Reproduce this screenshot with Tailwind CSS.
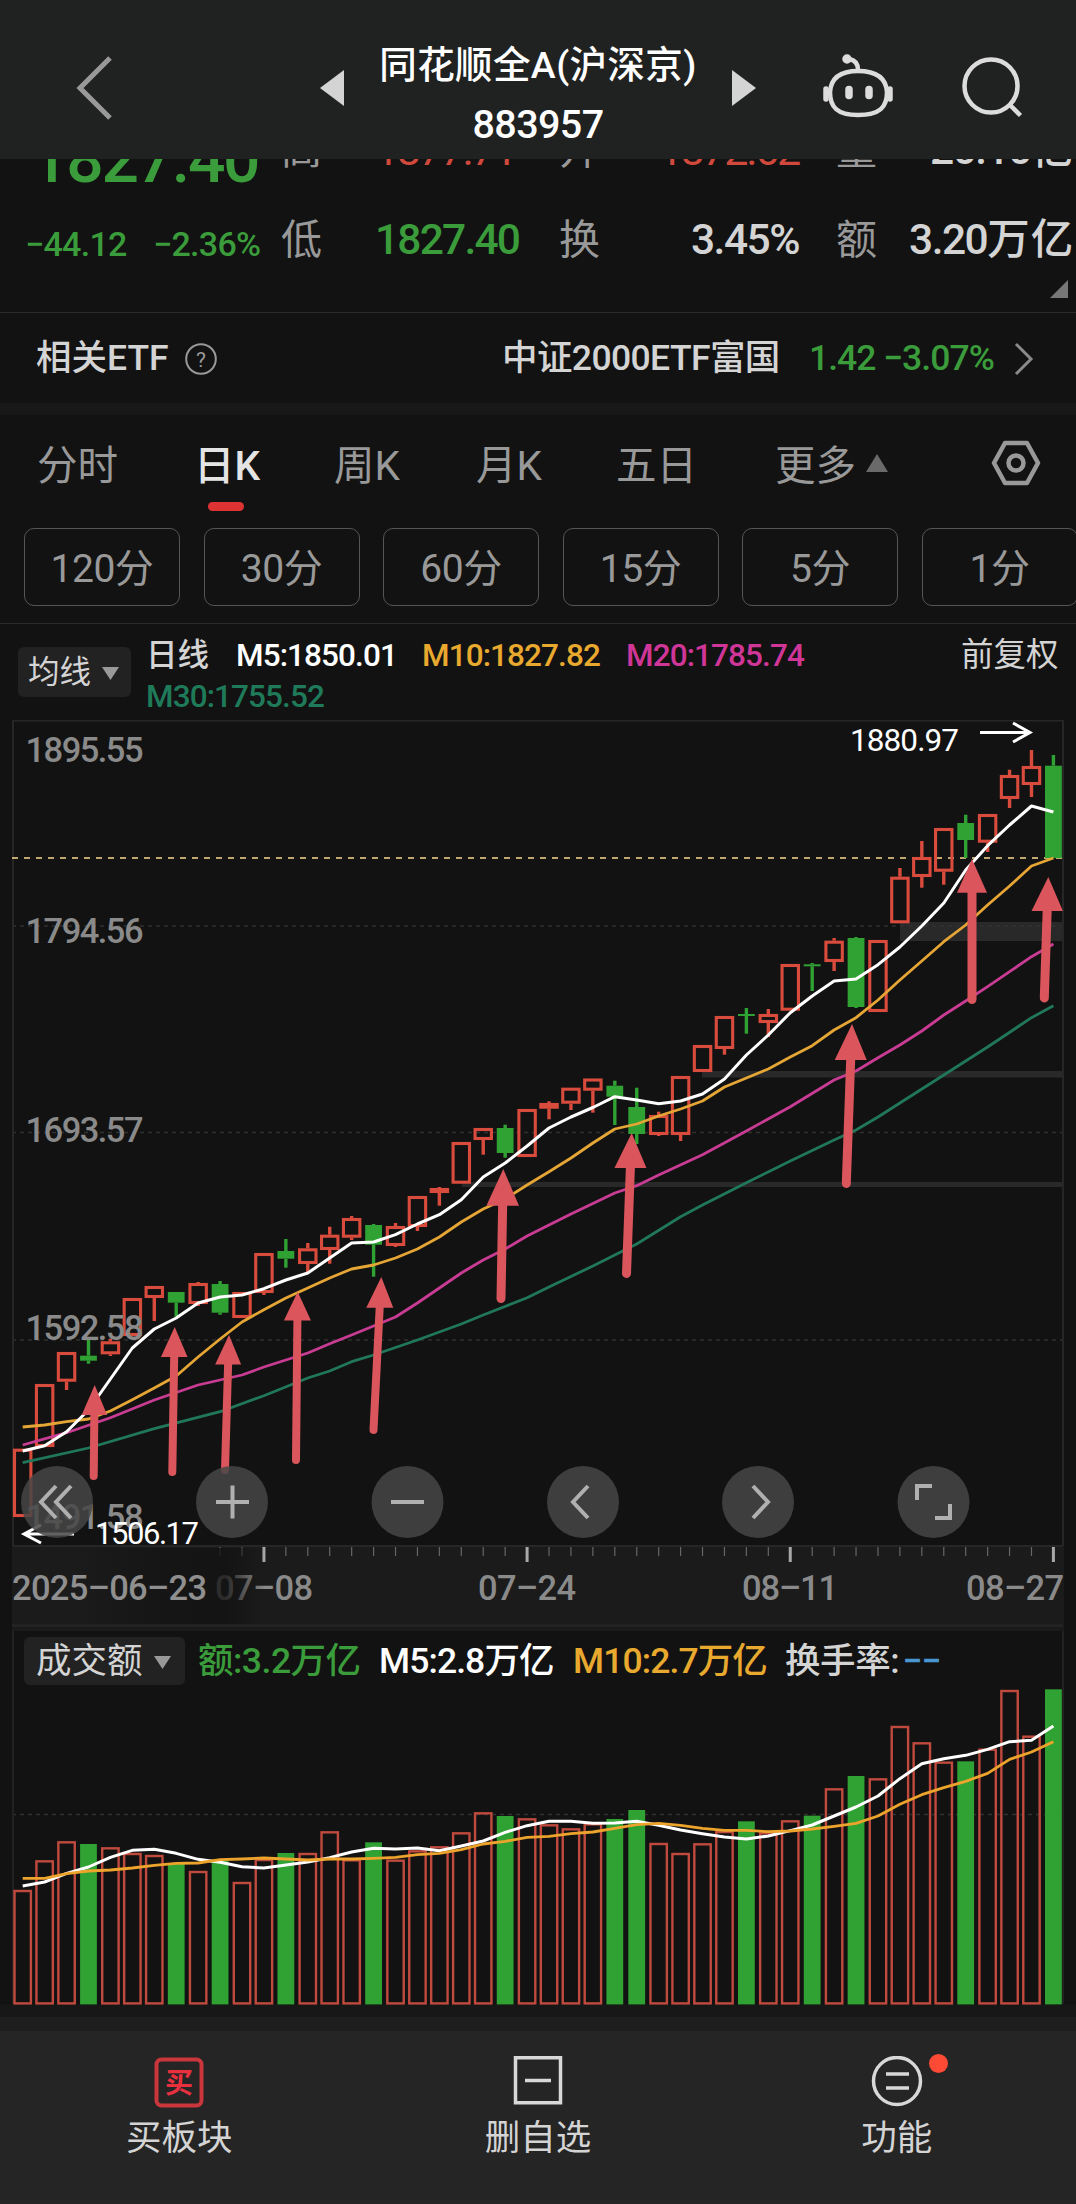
<!DOCTYPE html>
<html lang="zh-CN">
<head>
<meta charset="utf-8">
<title>同花顺全A 883957</title>
<script src="https://cdn.jsdelivr.net/npm/@tailwindcss/browser@4"></script>
</head>
<body class="bg-[#121212] overflow-hidden">
<div class="w-[1076px] h-[2204px] flex flex-col overflow-hidden font-[Roboto,'Noto_Sans_CJK_SC',sans-serif] text-[#d4d4d4] whitespace-nowrap leading-none">

  <header class="h-[159px] shrink-0 bg-[#202221] flex z-10">
    <div class="w-[320px] pl-[74px] pt-[54px]">
      <svg width="42" height="68" fill="none" stroke="#999" stroke-width="5"><path d="M36 4 6 34 36 64"/></svg>
    </div>
    <svg class="mt-[70px] shrink-0" width="24" height="36" fill="#d4d4d4"><path d="M0 18 24 0V36z"/></svg>
    <div class="w-[388px] pt-[46px] flex flex-col items-center text-white font-medium">
      <div class="h-10 flex items-center text-[37.5px] tracking-[0.4px]">同花顺全A(沪深京)</div>
      <div class="h-[42px] mt-[18px] flex items-center text-[39.5px] tracking-[-0.6px]">883957</div>
    </div>
    <svg class="mt-[70px] shrink-0" width="24" height="36" fill="#d4d4d4"><path d="M24 18 0 0V36z"/></svg>
    <svg class="ml-[62px] mt-[50px] shrink-0" width="80" height="74" fill="none" stroke="#dcdcdc" stroke-width="4.5" stroke-linecap="round">
      <path d="M40 21C58 21 68 28 69 42C69 57 62 65 40 65C19 65 12 57 12 42C13 28 22 21 40 21z"/><path d="M8 39v10M72 39v10" stroke-width="5.5"/><path d="M40 20c0-6-3-10-9-11"/><circle cx="29" cy="9" r="2.5" fill="#dcdcdc"/><path d="M31 39.500v6M51 39.500v6" stroke-width="7.500"/>
    </svg>
    <svg class="ml-[58px] mt-[50px] shrink-0" width="70" height="74" fill="none" stroke="#dcdcdc" stroke-width="4.500"><circle cx="35" cy="36" r="26.500"/><path d="M54 55 64.500 65.500"/></svg>
  </header>

  <section class="h-[153px] shrink-0 flex border-b border-[#2a2a2a] box-content">
    <div class="w-[281px] pl-[26px] text-[#3a9c3a] font-medium">
      <div class="-mt-[33px] h-[68px] pl-[5px] flex items-center text-[66px] tracking-[-2.3px]">1827.40</div>
      <div class="mt-[30px] h-10 -ml-px flex items-center text-[34px] tracking-[-0.7px]"><span class="w-[128px]">−44.12</span><span>−2.36%</span></div>
    </div>
    <div class="w-[278px] text-[41px]">
      <div class="-mt-[29px] h-10 flex items-center"><span class="w-[94px] text-[#999]">高</span><span class="text-[#d1493c] tracking-[-2.300px] text-[43px]">1877.71</span></div>
      <div class="mt-[50px] h-10 flex items-center"><span class="w-[94px] text-[#999]">低</span><span class="text-[#3a9c3a] tracking-[-1.8px] text-[42.5px] font-medium">1827.40</span></div>
    </div>
    <div class="w-[240px] text-[41px] shrink-0">
      <div class="-mt-[29px] h-10 flex items-center justify-between"><span class="text-[#999]">开</span><span class="text-[#d1493c] tracking-[-2.300px] text-[43px]">1872.62</span></div>
      <div class="mt-[50px] h-10 flex items-center justify-between"><span class="text-[#999]">换</span><span class="tracking-[-1.5px] text-[42.5px] font-medium">3.45%</span></div>
    </div>
    <div class="ml-[37px] w-[240px] text-[41px] shrink-0">
      <div class="-mt-[29px] h-10 flex items-center"><span class="w-[94px] text-[#999]">量</span><span class="tracking-[-1.5px] text-[42.5px] font-medium">20.10亿</span></div>
      <div class="mt-[50px] h-10 flex items-center"><span class="w-[73px] text-[#999]">额</span><span class="tracking-[-1.5px] text-[42.5px] font-medium">3.20<span class="tracking-[1px]">万亿</span></span></div>
      <svg class="mt-[20px] ml-[214px]" width="18" height="18" fill="#777"><path d="M18 0V18H0z"/></svg>
    </div>
  </section>

  <section class="h-[90px] shrink-0 flex items-center text-[35.5px] pl-[36px] font-medium pt-[2px]">
    <span class="w-[149px]">相关ETF</span>
    <svg class="shrink-0" width="32" height="32" fill="none" stroke="#999" stroke-width="2"><circle cx="16" cy="16" r="14.8"/><text x="16" y="23.5" font-size="21" font-weight="400" text-anchor="middle" fill="#999" stroke="none">?</text></svg>
    <span class="ml-[285px] w-[307px] tracking-[-0.6px]">中证2000ETF富国</span>
    <span class="w-[74px] text-[#3a9c3a] tracking-[-1px]">1.42</span>
    <span class="w-[131px] text-[#3a9c3a] tracking-[-0.9px]">−3.07%</span>
    <svg width="22" height="36" class="shrink-0" fill="none" stroke="#8a8a8a" stroke-width="3"><path d="M2 3 17 18 2 33"/></svg>
  </section>
  <div class="h-[12px] shrink-0 bg-[#181818]"></div>

  <nav class="h-[96px] shrink-0 flex text-[40.5px] text-[#999] pl-[37px]">
    <span class="w-[157px] pt-[31px]">分时</span>
    <span class="w-[140px] pt-[31px] text-[#e4e4e4] font-medium">日K<i class="block w-9 h-[9px] mt-[15px] ml-[14px] rounded-full bg-[#dd3333]"></i></span>
    <span class="w-[142px] pt-[31px]">周K</span>
    <span class="w-[140px] pt-[31px]">月K</span>
    <span class="w-[159px] pt-[31px]">五日</span>
    <span class="w-[91px] pt-[31px]">更多</span>
    <svg class="mt-[39px] shrink-0" width="22" height="18" fill="#6a6a6a"><path d="M11 0 22 18H0z"/></svg>
    <svg class="ml-[102px] mt-[23px] shrink-0" width="52" height="50" fill="none" stroke="#999" stroke-width="4.5" stroke-linejoin="round"><path d="M15 5H37L48 25 37 45H15L4 25z"/><circle cx="26" cy="25" r="7.5"/></svg>
  </nav>

  <div class="h-[113px] shrink-0 pt-[17px] pl-6 flex gap-[23.5px] border-b border-[#2a2a2a] text-[39px] text-[#999] tracking-[-0.5px]">
    <div class="w-[156px] h-[78px] pt-1 shrink-0 rounded-[10px] border-[1.5px] border-[#555] flex items-center justify-center">120分</div>
    <div class="w-[156px] h-[78px] pt-1 shrink-0 rounded-[10px] border-[1.5px] border-[#555] flex items-center justify-center">30分</div>
    <div class="w-[156px] h-[78px] pt-1 shrink-0 rounded-[10px] border-[1.5px] border-[#555] flex items-center justify-center">60分</div>
    <div class="w-[156px] h-[78px] pt-1 shrink-0 rounded-[10px] border-[1.5px] border-[#555] flex items-center justify-center">15分</div>
    <div class="w-[156px] h-[78px] pt-1 shrink-0 rounded-[10px] border-[1.5px] border-[#555] flex items-center justify-center">5分</div>
    <div class="w-[156px] h-[78px] pt-1 shrink-0 rounded-[10px] border-[1.5px] border-[#555] flex items-center justify-center">1分</div>
  </div>

  <div class="h-[96px] shrink-0 flex pl-[18px] text-[31.5px]">
    <div class="mt-[23px] w-[113px] h-[50px] shrink-0 rounded-md bg-[#222] flex items-center pl-[10px] pt-[2px]">均线<svg class="ml-[11px]" width="17" height="13" fill="#999"><path d="M0 0H17L8.500 13z"/></svg></div>
    <div class="ml-[15px] w-[815px] pt-[11px]">
      <div class="h-[41px] flex items-center tracking-[-0.9px]"><span class="w-[90px] tracking-normal font-medium">日线</span><span class="w-[186px] text-white font-medium">M5:1850.01</span><span class="w-[204px] text-[#e8a92e] font-medium">M10:1827.82</span><span class="text-[#d03698] font-medium">M20:1785.74</span></div>
      <div class="h-[41px] flex items-center tracking-[-0.9px] text-[#1f7a5a] font-medium">M30:1755.52</div>
    </div>
    <div class="pt-[11px]"><div class="h-10 flex items-center text-[32.5px]">前复权</div></div>
  </div>

  <svg id="kline" class="shrink-0" width="1076" height="911" viewBox="0 720 1076 911"></svg>

  <div class="h-[54px] shrink-0 mx-3 border-x-2 border-[#222] pt-[6px] pl-[10px] flex items-start text-[35.5px]">
    <div class="w-[161px] h-[48px] shrink-0 rounded-md bg-[#222] flex items-center pl-[12px] pt-[2px]">成交额<svg class="ml-[11px]" width="17" height="13" fill="#999"><path d="M0 0H17L8.500 13z"/></svg></div>
    <div class="h-[50px] flex items-center ml-[13px] tracking-[-0.9px] font-medium"><span class="w-[181px] text-[#3a9c3a] tracking-[-0.5px]">额:3.2万亿</span><span class="w-[194px] text-white">M5:2.8万亿</span><span class="w-[212px] text-[#e8a92e]">M10:2.7万亿</span><span class="tracking-[-0.4px]">换手率:</span><span class="ml-[3px] text-[#4a96d2]">−−</span></div>
  </div>
  <svg id="volume" class="shrink-0" width="1076" height="332" viewBox="0 1685 1076 332"></svg>
  <div class="h-[14px] shrink-0 bg-[#1e1e1e]"></div>

  <footer class="h-[173px] shrink-0 bg-[#252525] grid grid-cols-3 text-[35.500px]">
    <div class="flex flex-col items-center pt-[25px]">
      <svg width="52" height="54" fill="none"><rect x="3.500" y="3.500" width="45" height="46" rx="5" stroke="#c9363c" stroke-width="4"/><text x="26" y="37" font-size="28" font-weight="bold" text-anchor="middle" fill="#e8303e">买</text></svg>
      <span class="mt-[11px]">买板块</span>
    </div>
    <div class="flex flex-col items-center pt-[25px]">
      <svg width="52" height="54" fill="none" stroke="#d8d8d8" stroke-width="3.5"><rect x="3.500" y="1.750" width="45" height="45"/><path d="M13 24.500H39"/></svg>
      <span class="mt-[11px]">删自选</span>
    </div>
    <div class="flex flex-col items-center pt-[25px] relative">
      <svg width="52" height="54" fill="none" stroke="#d8d8d8" stroke-width="3.5"><circle cx="26" cy="25" r="23.500"/><path d="M15 18H38M15 32H38"/></svg>
      <span class="mt-[11px]">功能</span>
      <i class="absolute left-[212px] top-[23px] w-[19px] h-[19px] rounded-full bg-[#fc4a35]"></i>
    </div>
  </footer>
</div>

<script>
const X = i => 22.7 + i * 21.93;
const RED = '#d94c3d', GREEN = '#2fa233';
const font = `font-family="Roboto"`;
const poly = (pts, c, w) => `<polyline points="${pts.map(p => X(p[0]).toFixed(1) + ',' + p[1]).join(' ')}" fill="none" stroke="${c}" stroke-width="${w}" stroke-linejoin="round"/>`;
const label = (x, y, t, w, size, c, weight = 400) => `<text x="${x}" y="${y}" ${font} font-size="${size}" font-weight="${weight}" fill="${c}" textLength="${w}">${t}</text>`;

// direction (1 up, 0 down), body top, body bottom, wick top, wick bottom
const candles = [
[1,1448.7,1517],[1,1384,1447],[1,1352,1381.7,0,1390],[0,1355.7,1360.7,1340,1363.7],[1,1341.3,1354.3,1338.7,1356],[1,1298,1336],
[1,1286,1298,0,1321],[0,1292,1302.7,0,1316.7],[1,1283,1304,1282,1306],[0,1284,1312.7,1281,1314.7],[1,1292,1318],[1,1253,1293,0,1295],
[0,1251,1258.7,1239,1267.7],[1,1248.3,1264,1243,1272],[1,1234.7,1250,1226.7,1263.7],[1,1218,1237.7,1216,1240],[0,1225,1244.7,1224,1276.7],
[1,1226,1246,1223,1247],[1,1196,1227,0,1231],[1,1188,1193,1187,1205.7],[1,1142,1183.7],[1,1128,1140,0,1154.7],[0,1128,1153,1124.7,1157.7],
[1,1109,1157],[1,1103,1108.7,1101.3,1119.3],[1,1087.7,1103.7,0,1110],[1,1078.5,1090.7,0,1112.7],[0,1085.7,1096.7,1080.7,1125],
[0,1107,1134,1087.7,1144],[1,1115,1135,1111.7,1136],[1,1076,1135,0,1141],[1,1045,1072],[1,1016,1049,0,1054.7],[0,1014,1016,1008,1033.7],
[1,1014,1023,1009,1037],[1,964,1010.7],[0,964.3,966.3,963,991],[1,940.7,962,938,971],[0,938,1007,937,1008],[1,940,1012],
[1,876.7,923.3,868,0],[1,857,877,841,887.7],[1,828,871.7,0,884.7],[0,823,840,814.7,858],[1,814,842.7,0,852],[1,775,799,769.7,808],
[1,766,785,750,797],[0,765.7,858,755,0]];
const ma5 = [1451,1445.7,1431.7,1410,1379,1348,1329,1318,1303,1297,1295,1288.7,1280,1273,1258,1243,1242,1234.7,1224,1214.7,1199.7,1177,1163,1146,1128,1117,1107.5,1096.7,1100,1103.7,1101,1094,1079,1055,1035,1012.7,996,981,979,964.7,947,926,903,870,845.7,825,806,812].map((y,i)=>[i,y]);
const ma10 = [1427,1425,1421.7,1419,1411,1399.7,1388,1376,1357,1339,1322,1309.7,1298,1288,1278,1269,1265,1258,1249,1237,1222,1209,1199,1185,1171.7,1158,1143,1129,1124,1116,1109,1101,1087,1078,1069,1057,1045.7,1030,1017.7,1000,980,961,941.7,925,905,886,866,858].map((y,i)=>[i,y]);
const ma20 = [[0,1445],[2,1432.7],[4,1417.7],[6,1400],[8,1385],[10,1375],[11,1367],[12,1360],[13,1353],[14,1343.7],[15,1335],[17,1317],[18,1303],[19,1288],[20,1273],[21,1260],[22,1249],[23,1236],[24,1225],[25,1214],[27,1193],[28,1185.7],[29,1175],[31,1154.7],[33,1131],[35,1106.7],[37,1080],[38,1071],[39,1057.7],[40,1045],[41,1031],[42,1015],[43,1001],[44,986.7],[45,971.7],[46,956.7],[47,944]];
const ma30 = [[0,1462.7],[3,1448],[6,1428.7],[9,1411.7],[11,1395.7],[13,1378],[14,1371],[15,1361.7],[16,1355],[18,1340],[20,1324],[21,1315],[23,1297.7],[24,1287],[26,1266],[28,1244],[30,1216.7],[31,1205],[33,1182.7],[35,1161],[37,1140],[38,1130],[39,1117],[40,1103],[42,1075],[44,1047],[46,1017.7],[47,1005.7]];
// tip x, tip y, head base y, half head width, tail x, tail y, shaft width
const arrows = [[94.7,1385,1415,12.7,93.7,1480,8],[174.7,1327,1357,13.3,172.3,1476,8],[229,1335,1364.5,13,225,1474,8],[297.700,1291.7,1320.500,13.5,296,1464,8],[381.3,1277,1307.700,13.5,373.5,1434,8],[503.3,1169,1205.7,16.3,501,1303,9],[631.7,1133,1168,16,626.5,1278,9],[852,1024,1060,16,846.3,1188,9],[972,859,892.7,15,972,1004,9],[1048.3,877,911,15.700,1044.300,1002.5,9]];

let s = `<defs><linearGradient id="fade"><stop offset="0" stop-color="#121212" stop-opacity="0"/><stop offset=".45" stop-color="#121212" stop-opacity=".6"/><stop offset=".8" stop-color="#121212" stop-opacity=".8"/><stop offset="1" stop-color="#121212" stop-opacity="0"/></linearGradient></defs>`;
s += `<rect x="12" y="1547" width="1052" height="84" fill="#1b1b1b"/><rect x="900" y="922" width="164" height="19" fill="#292929"/><rect x="702" y="1071" width="362" height="6.5" fill="#292929"/><rect x="462" y="1182" width="602" height="5" fill="#292929"/>`;
s += `<path d="M12 926H1063M12 1132.500H1063M12 1340H1063" stroke="#303030" stroke-width="1.300" stroke-dasharray="4 4"/>`;
s += `<path d="M12 1546H1063M13 720V1546M1063 720V1546M12 720.500H1064M12 1625.500H1063" stroke="#262626" stroke-width="2" fill="none"/>`;
s += `<path d="M12 858H1063" stroke="#c2a870" stroke-width="2" stroke-dasharray="6 6"/>`;
candles.forEach(([up, t, b, h, l], i) => {
  const x = X(i), c = up ? RED : GREEN;
  if (h) s += `<path d="M${x} ${h}V${t}" stroke="${c}" stroke-width="3.400"/>`;
  if (l) s += `<path d="M${x} ${b}V${l}" stroke="${c}" stroke-width="3.400"/>`;
  s += up ? `<rect x="${x - 8.2}" y="${t + 1.5}" width="16.400" height="${Math.max(b - t - 3, 1)}" fill="none" stroke="${c}" stroke-width="3.100"/>`
          : `<rect x="${x - 8.4}" y="${t}" width="16.800" height="${b - t}" fill="${c}"/>`;
});
s += poly(ma30, '#20775a', 2.8) + poly(ma20, '#c93c94', 2.8) + poly(ma10, '#e5a636', 2.8) + poly(ma5, '#fff', 3);
[[762,'1895.55'],[943,'1794.56'],[1141.500,'1693.57'],[1339.500,'1592.58'],[1529,'1491.58']].forEach(([y, t]) => s += label(25.500, y, t, 118, 34.5, '#8a8a8a', 500));
s += label(850, 751, '1880.97', 109, 31.5, '#fff') + label(95, 1544, '1506.17', 104, 31, '#fff');
s += `<path d="M980 732.500H1030M1013 723 1030 732.500 1013 742M74 1534H24M41 1525 24 1534 41 1543" fill="none" stroke="#fff" stroke-width="3"/>`;
arrows.forEach(([tx, ty, by, hw, ex, ey, w]) => {
  const cx = tx + (ex - tx) * (by - ty) / (ey - ty);
  s += `<path d="M${cx} ${by - 2}L${ex} ${ey - w / 2}" stroke="#da565c" stroke-width="${w}" stroke-linecap="round"/><path d="M${tx} ${ty}L${cx + hw} ${by}H${cx - hw}z" fill="#da565c"/>`;
});
[57,232,407.5,583,758,933.5].forEach(x => s += `<circle cx="${x}" cy="1502" r="36" fill="#464646" fill-opacity=".85"/>`);
s += `<path d="M56 1486 41 1502 56 1518M71 1486 56 1502 71 1518M216 1502H249M232.500 1485.500V1518.500M391 1502H424M588 1486 573 1502 588 1518M753 1486 768 1502 753 1518M917 1500V1486H932M950 1504V1518H935" fill="none" stroke="#b0b0b0" stroke-width="4"/>`;
for (let i = 9; i < 48; i++) {
  const major = i % 12 === 11;
  s += `<path d="M${X(i)} 1547V${major ? 1562 : 1556}" stroke="${major ? '#a8a8a8' : '#666'}" stroke-width="${major ? 3 : 1.2}"/>`;
}
[[215,'07–08',98],[478,'07–24',98],[742,'08–11',96],[966,'08–27',98]].forEach(([x, t, w]) => s += label(x, 1600, t, w, 34.5, '#8a8a8a', 500));
s += `<rect x="70" y="1548" width="195" height="76" fill="url(#fade)"/>` + label(12, 1600, '2025–06–23', 195, 34.5, '#8f8f8f', 500);
document.getElementById('kline').innerHTML = s;

// direction and top offset of each turnover bar, in thirds of a pixel below 1670
const bars = [[1,660],[1,571],[1,514],[0,522],[1,532],[1,549],[1,555],[0,580],[1,603],[0,572],[1,636],[1,567],[0,549],[1,549],[1,484],[1,568],[0,517],[1,569],[1,541],[1,529],[1,487],[1,427],[0,438],[1,445],[1,463],[1,475],[1,460],[0,447],[0,420],[1,519],[1,549],[1,520],[1,483],[0,454],[1,487],[1,451],[0,437],[1,355],[0,318],[1,325],[1,168],[1,217],[1,275],[0,274],[1,236],[1,60],[1,197],[0,58]];
const v5 = [648,636,610,591,562,541,538,550,568,577,590,594,585,576,563,546,535,537,534,542,528,513,487,467,454,454,460,459,454,466,480,491,501,507,498,482,465,438,411,378,326,281,266,256,238,215,211,168];
const v10 = [625,625,611,603,600,594,586,580,579,569,567,564,567,570,567,567,565,562,554,550,539,522,514,502,499,491,486,475,464,460,466,475,481,481,485,483,477,469,460,438,403,374,353,334,310,268,246,215];
const V = v => 1670 + v / 3;
let t = `<rect x="0" y="2004.500" width="1076" height="13" fill="#171717"/><path d="M12 1814.500H1063" stroke="#303030" stroke-width="1.300" stroke-dasharray="4 4"/><path d="M13 1685V2004M1063 1685V2004" stroke="#222" stroke-width="2"/>`;
bars.forEach(([up, v], i) => {
  const x = X(i), y = V(v);
  t += up ? `<rect x="${x - 8.2}" y="${y + 1}" width="16.400" height="${2003.4 - y - 1}" fill="none" stroke="#c04a3e" stroke-width="2.400"/>`
          : `<rect x="${x - 8.4}" y="${y}" width="16.800" height="${2004.4 - y}" fill="${GREEN}"/>`;
});
t += poly(v5.map((v, i) => [i, V(v)]), '#fff', 3) + poly(v10.map((v, i) => [i, V(v)]), '#eda42c', 2.800);
document.getElementById('volume').innerHTML = t;
</script>
</body>
</html>
